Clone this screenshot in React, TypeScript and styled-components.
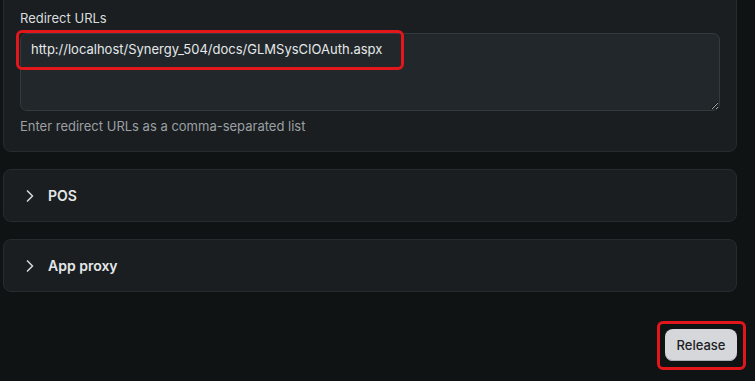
import React from "react";
import styled, { createGlobalStyle } from "styled-components";

const Global = createGlobalStyle`
  html, body { margin: 0; padding: 0; background: #0f1314; height: 100%; overflow: hidden; }
  body { font-family: Inter, "Noto Sans", sans-serif; color: #e3e6e8; }
  * { box-sizing: border-box; }
`;

const Page = styled.div`
  display: flex;
  flex-direction: column;
  gap: 17px;
  padding: 0 18px 0 3px;
  margin-top: -8px;
`;

const Card = styled.section`
  background: #1a1e20;
  border: 1px solid #262b2e;
  border-radius: 8px;
`;

const FieldCard = styled(Card)`
  padding: 15px 16px 15px 16px;
  display: flex;
  flex-direction: column;
`;

const Label = styled.label`
  font-size: 13px;
  line-height: 20px;
  color: #d9dcde;
  margin-bottom: 5px;
`;

const AreaWrap = styled.div`
  position: relative;
  display: flex;
`;

const Area = styled.textarea`
  width: 100%;
  height: 78px;
  resize: vertical;
  background: #21272a;
  border: 1px solid #343b3e;
  border-radius: 7px;
  color: #e6e9eb;
  font-family: Inter, "Noto Sans", sans-serif;
  font-size: 13px;
  line-height: 20px;
  padding: 5px 10px;
  outline: none;
`;

const Highlight = styled.div<{ $l: number; $t: number; $w: number; $h: number }>`
  position: absolute;
  left: ${(p) => p.$l}px;
  top: ${(p) => p.$t}px;
  width: ${(p) => p.$w}px;
  height: ${(p) => p.$h}px;
  border: 3px solid #e3161b;
  border-radius: 6px;
  pointer-events: none;
`;

const Help = styled.div`
  margin-top: 5px;
  font-size: 13px;
  line-height: 20px;
  color: #9aa0a4;
`;

const Header = styled.button`
  all: unset;
  box-sizing: border-box;
  display: flex;
  align-items: center;
  gap: 8px;
  width: 100%;
  height: 51px;
  padding: 0 16px;
  cursor: pointer;
  color: #e4e7e9;
  font-family: Inter, "Noto Sans", sans-serif;
  font-size: 14px;
  font-weight: 600;
`;

const Footer = styled.div`
  display: flex;
  justify-content: flex-end;
  padding-top: 20px;
`;

const BtnWrap = styled.div`
  position: relative;
`;

const Button = styled.button`
  width: 72px;
  height: 32px;
  border: none;
  border-radius: 8px;
  background: #d5d7da;
  color: #1d2124;
  font-family: Inter, "Noto Sans", sans-serif;
  font-size: 13px;
  font-weight: 500;
  box-shadow: inset 0 -1px 0 #a9adb1;
`;

const Chevron = () => (
  <svg width="20" height="20" viewBox="0 0 24 24" fill="none" stroke="#d0d3d5" strokeWidth="2" strokeLinecap="round" strokeLinejoin="round">
    <path d="m9 18 6-6-6-6" />
  </svg>
);

const Section = ({ title }: { title: string }) => (
  <Card>
    <Header>
      <Chevron />
      {title}
    </Header>
  </Card>
);

export default function App() {
  return (
    <>
      <Global />
      <Page>
        <FieldCard>
          <Label>Redirect URLs</Label>
          <AreaWrap>
            <Area defaultValue="http://localhost/Synergy_504/docs/GLMSysCIOAuth.aspx" spellCheck={false} />
            <Highlight $l={-4} $t={-3} $w={388} $h={40} />
          </AreaWrap>
          <Help>Enter redirect URLs as a comma-separated list</Help>
        </FieldCard>
        <Section title="POS" />
        <Section title="App proxy" />
        <Footer>
          <BtnWrap>
            <Button>Release</Button>
            <Highlight $l={-8} $t={-8} $w={89} $h={49} />
          </BtnWrap>
        </Footer>
      </Page>
    </>
  );
}
